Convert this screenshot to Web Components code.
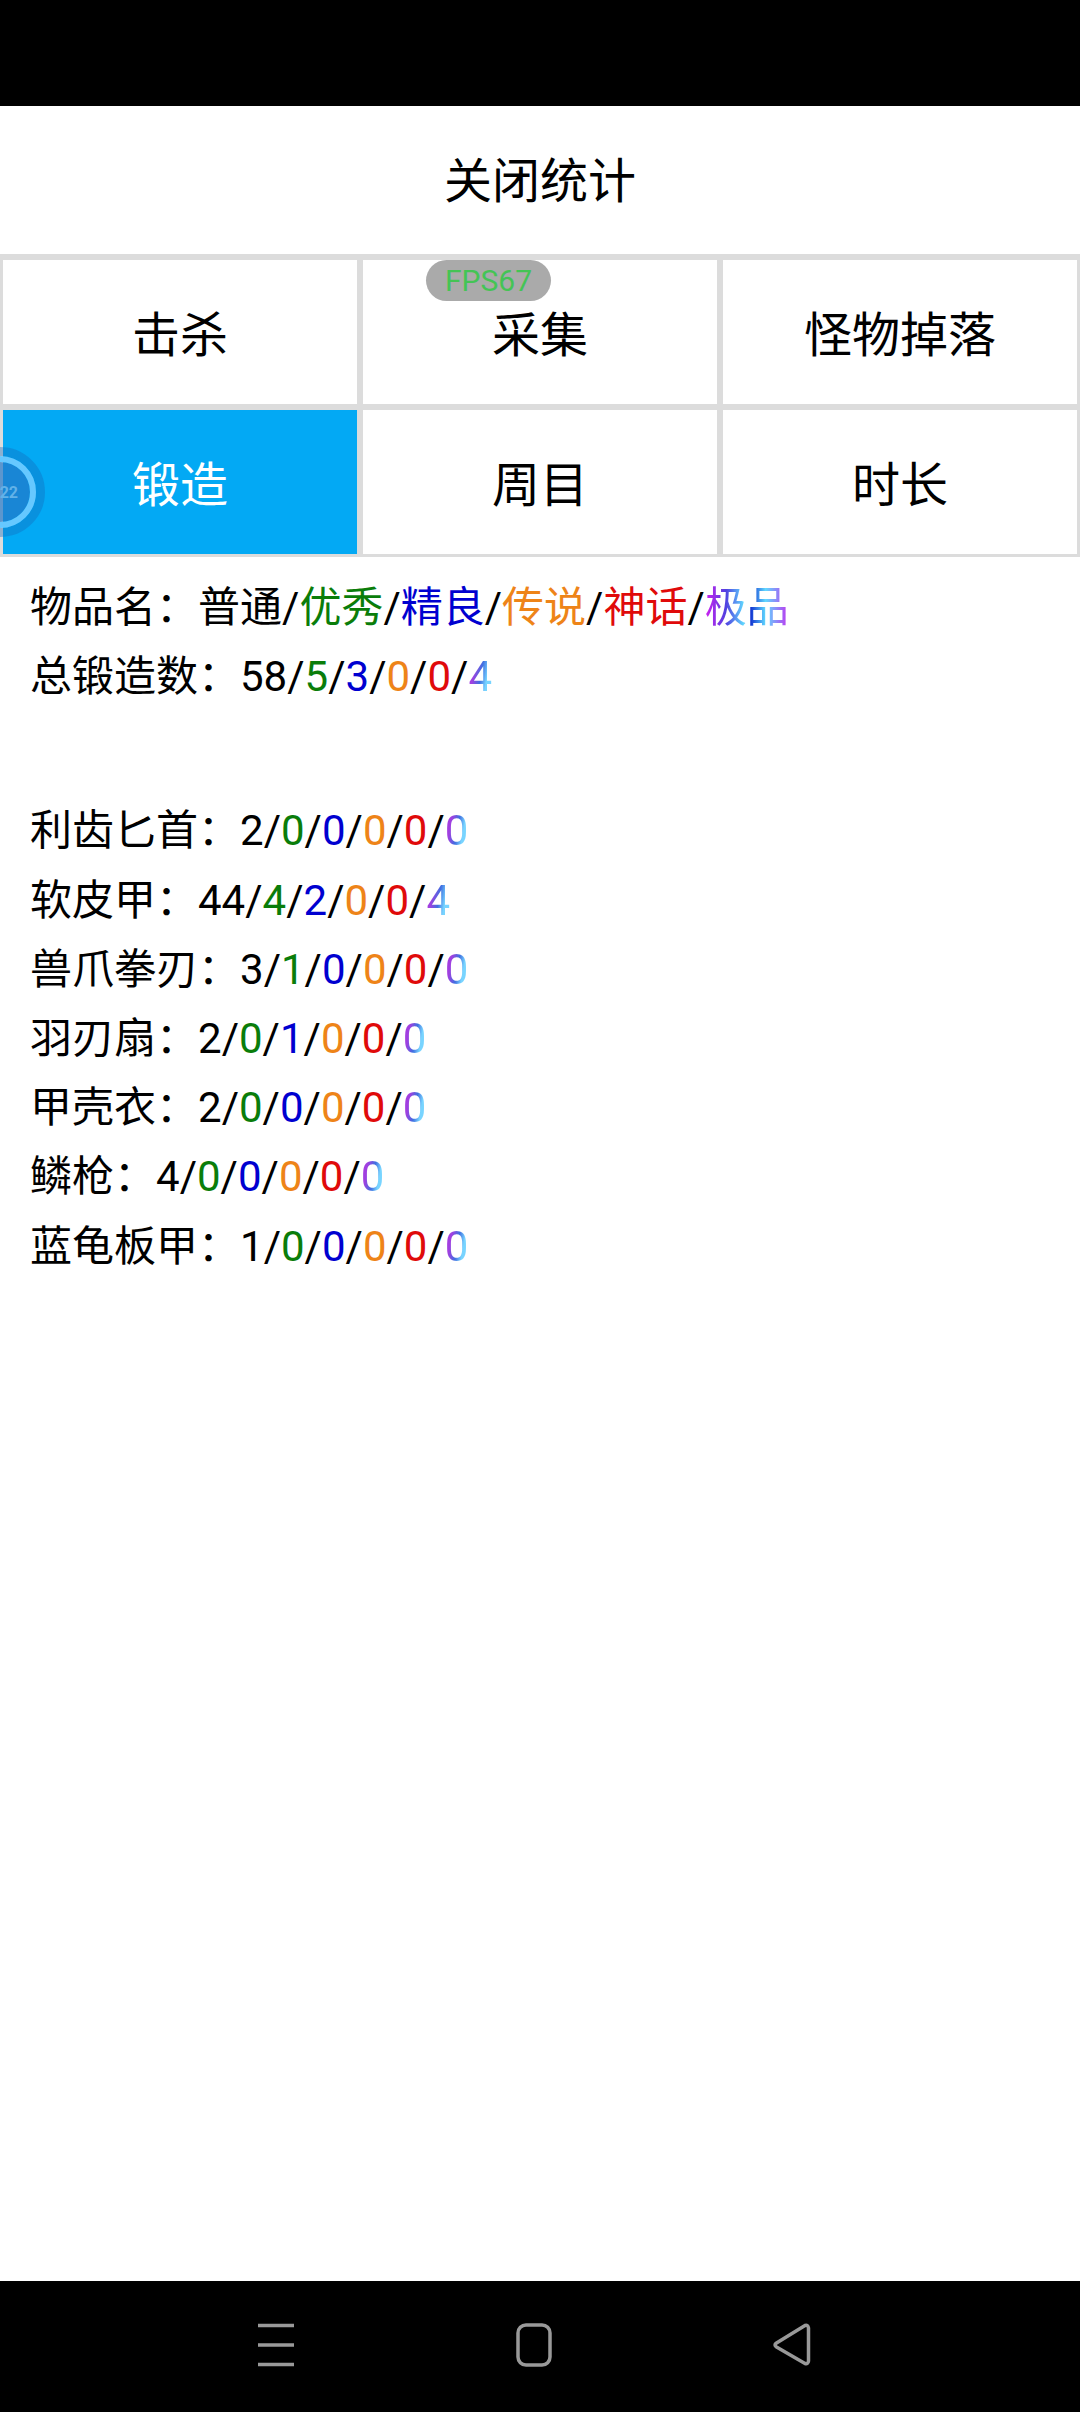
<!DOCTYPE html>
<html lang="zh">
<head>
<meta charset="utf-8">
<title>统计</title>
<style>
    html, body {
        margin: 0;
        padding: 0;
        background: #fff;
    }
    body {
        width: 1080px;
        height: 2412px;
        overflow: hidden;
        display: flex;
        flex-direction: column;
        position: relative;
        font-family: "Roboto", "Noto Sans CJK SC", sans-serif;
    }
</style>
</head>
<body>
<status-bar></status-bar>
<title-bar>关闭统计</title-bar>
<tab-grid>
    <tab-cell>击杀</tab-cell>
    <tab-cell>采集</tab-cell>
    <tab-cell>怪物掉落</tab-cell>
    <tab-cell active>锻造</tab-cell>
    <tab-cell>周目</tab-cell>
    <tab-cell>时长</tab-cell>
</tab-grid>
<stat-list id="stats"></stat-list>
<nav-bar></nav-bar>
<fps-badge>FPS67</fps-badge>
<float-ball>22</float-ball>

<script>
class StatusBar extends HTMLElement {
    constructor() {
        super();
        this.attachShadow({ mode: 'open' });
        this.shadowRoot.innerHTML = `
        <style>
            :host {
                display: block;
                height: 106px;
                background-color: #000;
            }
        </style>
        `;
    }
}

class TitleBar extends HTMLElement {
    constructor() {
        super();
        this.attachShadow({ mode: 'open' });
        this.shadowRoot.innerHTML = `
        <style>
            :host {
                display: flex;
                align-items: center;
                justify-content: center;
                box-sizing: border-box;
                height: 148px;
                padding-bottom: 6px;
                font-size: 48px;
                color: #000;
            }
        </style>
        <slot></slot>
        `;
    }
}

class TabGrid extends HTMLElement {
    constructor() {
        super();
        this.attachShadow({ mode: 'open' });
        this.shadowRoot.innerHTML = `
        <style>
            :host {
                display: grid;
                grid-template-columns: repeat(3, 354px);
                grid-auto-rows: 144px;
                gap: 6px;
                padding: 6px 3px 3px;
                background-color: #dcdcdc;
            }
        </style>
        <slot></slot>
        `;
    }
}

class TabCell extends HTMLElement {
    constructor() {
        super();
        this.attachShadow({ mode: 'open' });
        this.shadowRoot.innerHTML = `
        <style>
            :host {
                display: flex;
                align-items: center;
                justify-content: center;
                box-sizing: border-box;
                padding-bottom: 3px;
                background-color: #fff;
                color: #000;
                font-size: 48px;
            }
            :host([active]) {
                background-color: #03a9f4;
                color: #fff;
            }
        </style>
        <slot></slot>
        `;
    }
}

class StatList extends HTMLElement {
    constructor() {
        super();
        this.attachShadow({ mode: 'open' });
        this.shadowRoot.innerHTML = `
        <style>
            :host {
                display: block;
                flex: 1;
                padding: 16px 30px 0;
                font-size: 42px;
                line-height: 69.2px;
                color: #000;
            }
            .spacer {
                height: 85px;
            }
        </style>
        <div id="rows"></div>
        `;
    }
    connectedCallback() {
        const rows = this.shadowRoot.getElementById('rows');
        const data = [
            ['物品名', ['普通', '优秀', '精良', '传说', '神话', '极品']],
            ['总锻造数', [58, 5, 3, 0, 0, 4]],
            null,
            ['利齿匕首', [2, 0, 0, 0, 0, 0]],
            ['软皮甲', [44, 4, 2, 0, 0, 4]],
            ['兽爪拳刃', [3, 1, 0, 0, 0, 0]],
            ['羽刃扇', [2, 0, 1, 0, 0, 0]],
            ['甲壳衣', [2, 0, 0, 0, 0, 0]],
            ['鳞枪', [4, 0, 0, 0, 0, 0]],
            ['蓝龟板甲', [1, 0, 0, 0, 0, 0]],
        ];
        for (let row of data) {
            if (row == null) {
                let spacer = document.createElement('div');
                spacer.classList.add('spacer');
                rows.appendChild(spacer);
                continue;
            }
            let line = document.createElement('stat-row');
            line.setAttribute('name', row[0]);
            line.values = row[1];
            rows.appendChild(line);
        }
    }
}

class StatRow extends HTMLElement {
    constructor() {
        super();
        this.attachShadow({ mode: 'open' });
        this.shadowRoot.innerHTML = `
        <style>
            :host {
                display: block;
                white-space: nowrap;
            }
            .q1 { color: #0a7d0a; }
            .q2 { color: #0000d0; }
            .q3 { color: #ee8418; }
            .q4 { color: #e00a0a; }
            .q5 {
                color: transparent;
                background-image: linear-gradient(100deg, #a838e0 0%, #a040e0 28%, #3f6fe0 52%, #78d4ff 72%, #78d4ff 100%);
                -webkit-background-clip: text;
                background-clip: text;
            }
            .q5.wide {
                background-image: linear-gradient(90deg, #d020f0 0%, #5040e0 25%, #60d8ff 46%, #1030d0 54%, #60d8ff 72%, #c030f0 100%);
            }
        </style>
        <span id="line"></span>
        `;
    }
    connectedCallback() {
        const line = this.shadowRoot.getElementById('line');
        line.appendChild(document.createTextNode(this.getAttribute('name') + '：'));
        this.values.forEach((value, i) => {
            if (i > 0) {
                line.appendChild(document.createTextNode('/'));
            }
            let part = document.createElement('span');
            if (i > 0) {
                part.classList.add('q' + i);
            }
            if (typeof value == 'string') {
                part.classList.add('wide');
            }
            part.textContent = value;
            line.appendChild(part);
        });
    }
}

class NavBar extends HTMLElement {
    constructor() {
        super();
        this.attachShadow({ mode: 'open' });
        this.shadowRoot.innerHTML = `
        <style>
            :host {
                display: flex;
                align-items: center;
                justify-content: center;
                gap: 214px;
                box-sizing: border-box;
                height: 131px;
                padding: 0 12px 3px 0;
                background-color: #000;
            }
            svg {
                width: 44px;
                height: 44px;
                fill: none;
                stroke: #999;
                stroke-width: 3.5;
            }
        </style>
        <svg viewBox="0 0 44 44"><path d="M4 2.5H40M4 22H40M4 41.5H40"/></svg>
        <svg viewBox="0 0 44 44"><rect x="6" y="2" width="32" height="40" rx="8"/></svg>
        <svg viewBox="0 0 44 44" stroke-linejoin="round"><path d="M6.5 20 L35 2.5 Q38 1.5 38.5 5 V38 Q38 41.5 35 40.5 L6.5 24 Q3.5 22 6.5 20Z"/></svg>
        `;
    }
}

class FpsBadge extends HTMLElement {
    constructor() {
        super();
        this.attachShadow({ mode: 'open' });
        this.shadowRoot.innerHTML = `
        <style>
            :host {
                position: absolute;
                left: 426px;
                top: 260px;
                width: 125px;
                height: 41px;
                display: flex;
                align-items: center;
                justify-content: center;
                border-radius: 21px;
                background-color: #aaaaaa;
                color: #44c455;
                font-family: "Roboto", sans-serif;
                font-size: 30px;
            }
        </style>
        <slot></slot>
        `;
    }
}

class FloatBall extends HTMLElement {
    constructor() {
        super();
        this.attachShadow({ mode: 'open' });
        this.shadowRoot.innerHTML = `
        <style>
            :host {
                position: absolute;
                left: -45px;
                top: 447px;
                width: 90px;
                height: 90px;
                box-sizing: border-box;
                border-radius: 50%;
                border: 9px solid rgba(20, 110, 190, 0.4);
                background-clip: padding-box;
            }
            .ring {
                box-sizing: border-box;
                height: 100%;
                border-radius: 50%;
                border: 6px solid #66c8ff;
                background-color: rgba(36, 120, 200, 0.7);
                background-clip: padding-box;
                display: flex;
                align-items: center;
                justify-content: flex-end;
                color: #62b2e8;
                font-family: "Roboto", sans-serif;
                font-size: 16px;
                font-weight: 700;
                padding-right: 12px;
            }
        </style>
        <div class="ring"><slot></slot></div>
        `;
    }
}

customElements.define('status-bar', StatusBar);
customElements.define('title-bar', TitleBar);
customElements.define('tab-grid', TabGrid);
customElements.define('tab-cell', TabCell);
customElements.define('stat-row', StatRow);
customElements.define('stat-list', StatList);
customElements.define('nav-bar', NavBar);
customElements.define('fps-badge', FpsBadge);
customElements.define('float-ball', FloatBall);
</script>
</body>
</html>
